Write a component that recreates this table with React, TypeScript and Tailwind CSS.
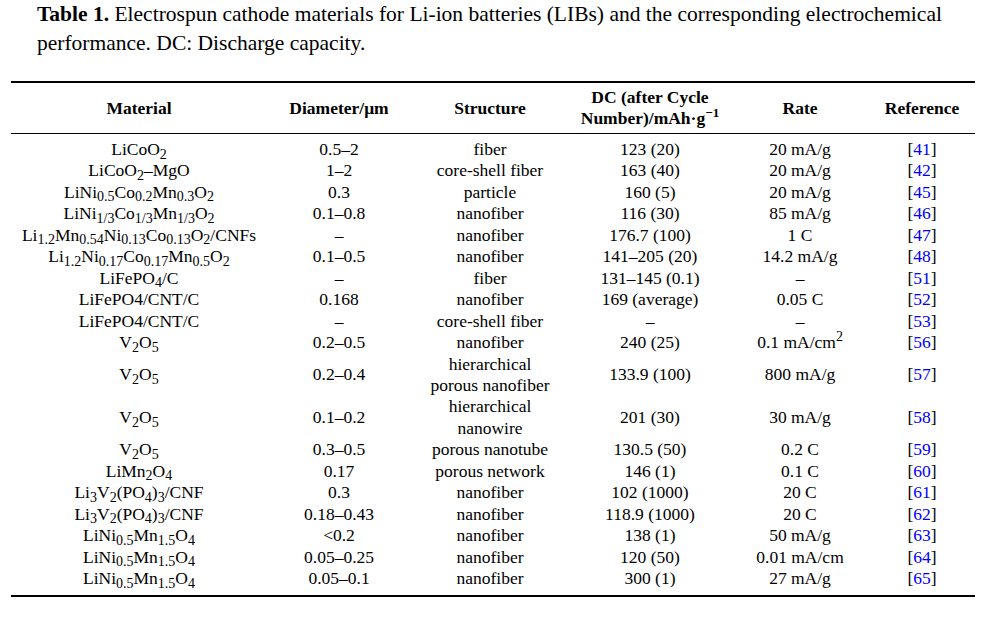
import type { ReactNode } from "react";

type Row = {
  material: ReactNode;
  diameter: string;
  structure: ReactNode;
  dc: string;
  rate: ReactNode;
  refNo: number;
};

const S = ({ children }: { children: ReactNode }) => <sub className="text-[80%]">{children}</sub>;

const LNMO = (
  <>
    LiNi<S>0.5</S>Mn<S>1.5</S>O<S>4</S>
  </>
);
const V2O5 = (
  <>
    V<S>2</S>O<S>5</S>
  </>
);
const LVP = (
  <>
    Li<S>3</S>V<S>2</S>(PO<S>4</S>)<S>3</S>/CNF
  </>
);

const rows: Row[] = [
  { material: <>LiCoO<S>2</S></>, diameter: "0.5–2", structure: "fiber", dc: "123 (20)", rate: "20 mA/g", refNo: 41 },
  { material: <>LiCoO<S>2</S>–MgO</>, diameter: "1–2", structure: "core-shell fiber", dc: "163 (40)", rate: "20 mA/g", refNo: 42 },
  {
    material: <>LiNi<S>0.5</S>Co<S>0.2</S>Mn<S>0.3</S>O<S>2</S></>,
    diameter: "0.3",
    structure: "particle",
    dc: "160 (5)",
    rate: "20 mA/g",
    refNo: 45,
  },
  {
    material: <>LiNi<S>1/3</S>Co<S>1/3</S>Mn<S>1/3</S>O<S>2</S></>,
    diameter: "0.1–0.8",
    structure: "nanofiber",
    dc: "116 (30)",
    rate: "85 mA/g",
    refNo: 46,
  },
  {
    material: <>Li<S>1.2</S>Mn<S>0.54</S>Ni<S>0.13</S>Co<S>0.13</S>O<S>2</S>/CNFs</>,
    diameter: "–",
    structure: "nanofiber",
    dc: "176.7 (100)",
    rate: "1 C",
    refNo: 47,
  },
  {
    material: <>Li<S>1.2</S>Ni<S>0.17</S>Co<S>0.17</S>Mn<S>0.5</S>O<S>2</S></>,
    diameter: "0.1–0.5",
    structure: "nanofiber",
    dc: "141–205 (20)",
    rate: "14.2 mA/g",
    refNo: 48,
  },
  { material: <>LiFePO<S>4</S>/C</>, diameter: "–", structure: "fiber", dc: "131–145 (0.1)", rate: "–", refNo: 51 },
  { material: "LiFePO4/CNT/C", diameter: "0.168", structure: "nanofiber", dc: "169 (average)", rate: "0.05 C", refNo: 52 },
  { material: "LiFePO4/CNT/C", diameter: "–", structure: "core-shell fiber", dc: "–", rate: "–", refNo: 53 },
  {
    material: V2O5,
    diameter: "0.2–0.5",
    structure: "nanofiber",
    dc: "240 (25)",
    rate: <>0.1 mA/cm<sup className="text-[80%]">2</sup></>,
    refNo: 56,
  },
  {
    material: V2O5,
    diameter: "0.2–0.4",
    structure: <>hierarchical<br />porous nanofiber</>,
    dc: "133.9 (100)",
    rate: "800 mA/g",
    refNo: 57,
  },
  {
    material: V2O5,
    diameter: "0.1–0.2",
    structure: <>hierarchical<br />nanowire</>,
    dc: "201 (30)",
    rate: "30 mA/g",
    refNo: 58,
  },
  { material: V2O5, diameter: "0.3–0.5", structure: "porous nanotube", dc: "130.5 (50)", rate: "0.2 C", refNo: 59 },
  { material: <>LiMn<S>2</S>O<S>4</S></>, diameter: "0.17", structure: "porous network", dc: "146 (1)", rate: "0.1 C", refNo: 60 },
  { material: LVP, diameter: "0.3", structure: "nanofiber", dc: "102 (1000)", rate: "20 C", refNo: 61 },
  { material: LVP, diameter: "0.18–0.43", structure: "nanofiber", dc: "118.9 (1000)", rate: "20 C", refNo: 62 },
  { material: LNMO, diameter: "<0.2", structure: "nanofiber", dc: "138 (1)", rate: "50 mA/g", refNo: 63 },
  { material: LNMO, diameter: "0.05–0.25", structure: "nanofiber", dc: "120 (50)", rate: "0.01 mA/cm", refNo: 64 },
  { material: LNMO, diameter: "0.05–0.1", structure: "nanofiber", dc: "300 (1)", rate: "27 mA/g", refNo: 65 },
];

const cols = "grid grid-cols-[256px_144px_158px_162px_138px_106px] items-center text-center";

export default function App() {
  return (
    <div className="w-[985px] h-[617px] bg-white text-black font-['Liberation_Serif','Times_New_Roman',serif]">
      <p className="ml-[37px] w-[930px] text-[21.5px] leading-[29px]">
        <span className="font-bold">Table 1.</span> Electrospun cathode materials for Li-ion batteries (LIBs) and the
        corresponding electrochemical performance. DC: Discharge capacity.
      </p>

      <div className="ml-[11px] mt-[23px] w-[964px]">
        <div className={`${cols} border-t-2 border-b border-black py-[4px] text-[17.5px] font-bold leading-[21px]`}>
          <div>Material</div>
          <div>Diameter/μm</div>
          <div>Structure</div>
          <div className="whitespace-nowrap">
            DC (after Cycle
            <br />
            Number)/mAh·g<sup className="text-[75%]">−1</sup>
          </div>
          <div>Rate</div>
          <div>Reference</div>
        </div>

        <div className="border-b-2 border-black pt-[5px] pb-[5px] text-[17.5px] leading-[21.45px]">
          {rows.map((r, i) => (
            <div key={i} className={cols}>
              <div className="whitespace-nowrap">{r.material}</div>
              <div>{r.diameter}</div>
              <div>{r.structure}</div>
              <div>{r.dc}</div>
              <div>{r.rate}</div>
              <div>
                [<span className="text-[#0000ff]">{r.refNo}</span>]
              </div>
            </div>
          ))}
        </div>
      </div>
    </div>
  );
}
